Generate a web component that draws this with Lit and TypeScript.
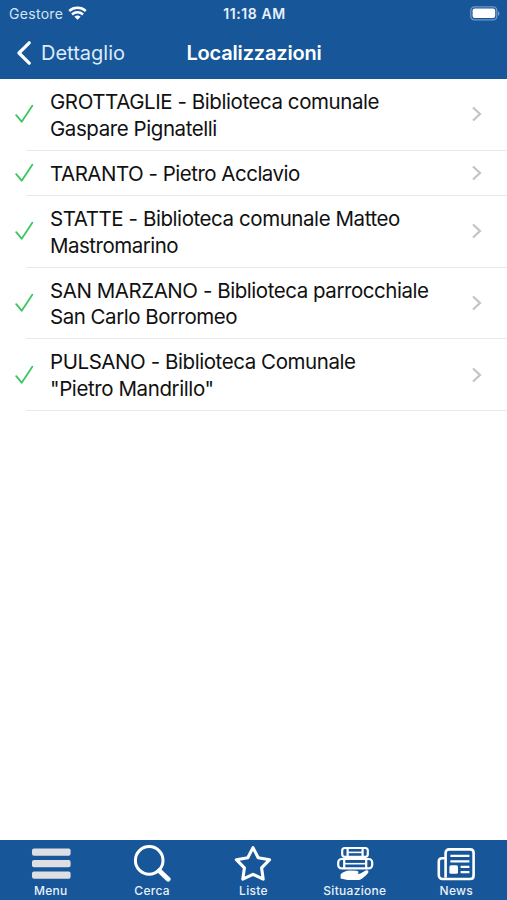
import { LitElement, html, css, svg } from "lit";
import { customElement } from "lit/decorators.js";

interface Place {
  lines: { text: string; spacing: number }[];
}

const places: Place[] = [
  { lines: [{ text: "GROTTAGLIE - Biblioteca comunale", spacing: -0.43 }, { text: "Gaspare Pignatelli", spacing: -0.43 }] },
  { lines: [{ text: "TARANTO - Pietro Acclavio", spacing: -0.5 }] },
  { lines: [{ text: "STATTE - Biblioteca comunale Matteo", spacing: -0.43 }, { text: "Mastromarino", spacing: -0.5 }] },
  { lines: [{ text: "SAN MARZANO - Biblioteca parrocchiale", spacing: -0.45 }, { text: "San Carlo Borromeo", spacing: -0.48 }] },
  { lines: [{ text: "PULSANO - Biblioteca Comunale", spacing: -0.43 }, { text: "\"Pietro Mandrillo\"", spacing: -0.4 }] },
];

const menuIcon = svg`<g fill="#dedfe3"><rect x="2" y="3.5" width="38.6" height="7.2" rx="2"/><rect x="2" y="15.1" width="38.6" height="7.2" rx="2"/><rect x="2" y="26.5" width="38.6" height="7.2" rx="2"/></g>`;

const searchIcon = svg`<g fill="none" stroke="#fff"><circle cx="18.2" cy="15.4" r="13.8" stroke-width="3"/><path d="M28.3 25.7L37.2 34.2" stroke-width="4.8" stroke-linecap="round"/></g>`;

const starIcon = svg`<path d="M21 2.6L26.2 12.7L37.6 14.7L29.6 22.9L31.2 34.2L21 29.3L10.8 34.2L12.4 22.9L4.4 14.7L15.8 12.7Z" fill="none" stroke="#fff" stroke-width="3.1" stroke-linejoin="round"/>`;

const booksIcon = svg`<g fill="none" stroke="#fff" stroke-width="2.2">
  <rect x="8.2" y="3" width="25.6" height="8.8" rx="2.6"/>
  <path d="M13.6 3V11.8M28.6 3V11.8"/><path d="M13.6 7.4H28.6" stroke-width="1.6"/>
  <rect x="4.2" y="14" width="34" height="9.4" rx="3.4"/>
  <path d="M10.2 14V23.4M32.2 14V23.4"/><path d="M10.2 18.7H32.2" stroke-width="1.6"/></g>
  <path d="M6.6 29.2C9.5 26.6 12.5 25.4 15.5 25.4L22.5 25.8C25 26.2 25 28.2 23.2 28.8H26L31.6 25.4C34 24.6 35.3 26.4 34 28C31.4 31 28.8 33.6 25.5 35H13.5L6.6 33.6Z" fill="#fff"/>`;

const newsIcon = svg`<g fill="none" stroke="#fff" stroke-width="2.6" stroke-linejoin="round">
  <path d="M10.6 32.6V7.8C10.6 5.8 12 4.4 14 4.4H35.2C37.2 4.4 38.6 5.8 38.6 7.8V30.4C38.6 32.6 37 34 35 34H7.6C5.2 34 3.8 32.3 3.8 30V16.2C3.8 14.2 5 13.2 7 13.2H10.4"/></g>
  <path d="M15.4 10.8H34.4M15.4 16.4H34.4M25.6 21.8H34.4M25.6 27.2H34.4" stroke="#fff" stroke-width="2.2"/>
  <rect x="14.4" y="20.2" width="8.6" height="8.6" rx="1.6" fill="#fff"/>`;

const tabs = [
  { name: "Menu", icon: menuIcon },
  { name: "Cerca", icon: searchIcon },
  { name: "Liste", icon: starIcon },
  { name: "Situazione", icon: booksIcon },
  { name: "News", icon: newsIcon },
];

@customElement("app-root")
export class AppRoot extends LitElement {
  static styles = css`
    :host { display: flex; flex-direction: column; height: 900px; background: #fff; color: #111; font-family: Inter, "Liberation Sans", sans-serif; }
    svg { display: block; flex: none; }
    header { background: #175799; color: #fff; height: 79px; }
    .status { display: grid; grid-template-columns: 1fr auto 1fr; align-items: center; height: 27px; padding: 0 7px 0 9px; }
    .carrier { display: flex; align-items: center; gap: 5px; font-size: 14px; line-height: 18px; letter-spacing: 0.3px; color: #d5e3f2; }
    .time { font-size: 14px; line-height: 18px; font-weight: 600; letter-spacing: 0.6px; color: #e8f1fb; }
    .battery { justify-self: end; }
    .nav { display: grid; grid-template-columns: 1fr auto 1fr; align-items: center; height: 52px; padding: 0 15px 0 16px; }
    .back { display: flex; align-items: center; gap: 9px; font-size: 20px; color: #dceafa; }
    .title { margin: 0; font-size: 20px; font-weight: 600; line-height: 26px; letter-spacing: -0.17px; }
    main { flex: 1; }
    ul { list-style: none; margin: 0; padding: 0; }
    .item { display: block; }
    .gutter { width: 50px; display: flex; align-items: center; flex: none; box-sizing: border-box; padding-left: 15px; }
    .row { display: flex; align-items: center; box-sizing: border-box; padding-right: 24px; }
    .label { flex: 1; padding: 10px 0 7px; font-size: 20.5px; line-height: 26.9px; white-space: nowrap; }
    .line { display: block; }
    .rule { height: 1px; margin-left: 26px; background: #e9e9ea; }
    nav { display: grid; grid-template-columns: repeat(5, 1fr); height: 60px; background: #175799; color: #e8f1fb; }
    .tab { display: flex; flex-direction: column; align-items: center; padding-top: 5px; font-size: 12px; font-weight: 500; line-height: 16px; letter-spacing: 0.3px; }
    .tab svg { margin-bottom: 1px; }
  `;

  render() {
    return html`
      <header>
        <div class="status">
          <div class="carrier"><span>Gestore</span>
            <svg width="19" height="15" viewBox="0 0 19 15"><g fill="none" stroke="#fff" stroke-width="2.5"><path d="M1.2 5C5.8.8 13.2.8 17.8 5"/><path d="M4 8.5C7.2 5.6 11.8 5.6 15 8.5"/></g><path d="M6.4 10.8C8.1 9.2 10.9 9.2 12.6 10.8L9.5 13.8Z" fill="#fff"/></svg>
          </div>
          <div class="time">11:18 AM</div>
          <svg class="battery" width="30" height="15" viewBox="0 0 30 15"><rect x=".8" y=".8" width="26" height="13" rx="3.6" fill="none" stroke="#7199c2" stroke-width="1.3"/><rect x="2.6" y="2.6" width="22.6" height="9.4" rx="2" fill="#fff"/><path d="M28 5.2C30 6 30 9 28 9.8Z" fill="#7199c2"/></svg>
        </div>
        <div class="nav">
          <div class="back"><svg width="16" height="24" viewBox="0 0 16 24"><path d="M13.2 1.8L3 12L13.2 22.2" fill="none" stroke="#fff" stroke-width="3.2" stroke-linecap="round" stroke-linejoin="round"/></svg><span>Dettaglio</span></div>
          <h1 class="title">Localizzazioni</h1>
        </div>
      </header>
      <main><ul>
        ${places.map((p) => html`<li class="item"><div class="row">
          <span class="gutter"><svg width="19" height="20" viewBox="0 0 19 20"><path d="M1.2 11.2L6.7 17.7L17.3 1.8" fill="none" stroke="#3cc65e" stroke-width="1.8" stroke-linecap="round" stroke-linejoin="round"/></svg></span>
          <span class="label">${p.lines.map((l) => html`<span class="line"><span style="letter-spacing:${l.spacing}px">${l.text}</span></span>`)}</span>
          <svg width="12" height="16" viewBox="0 0 12 16"><path d="M2 1.5L9 8L2 14.5" fill="none" stroke="#c3c3c6" stroke-width="2.2"/></svg>
        </div><div class="rule"></div></li>`)}
      </ul></main>
      <nav>${tabs.map((t) => html`<div class="tab"><svg width="42" height="37" viewBox="0 0 42 37">${t.icon}</svg><span>${t.name}</span></div>`)}</nav>
    `;
  }
}
